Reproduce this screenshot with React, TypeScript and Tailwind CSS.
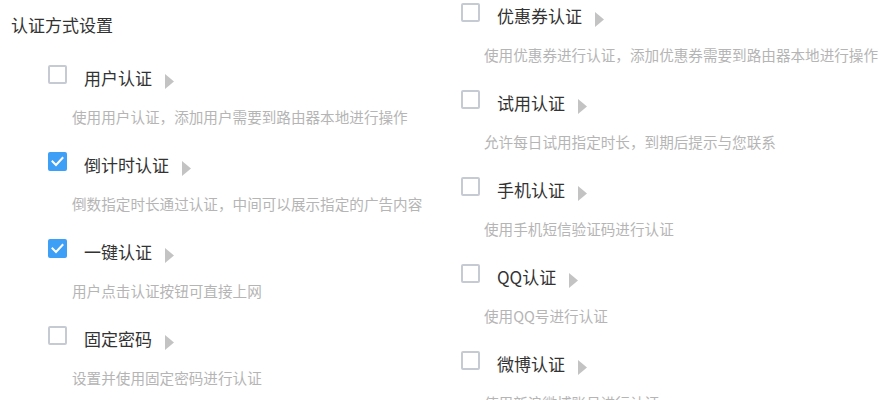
import React from "react";

type Item = { label: string; desc: string; checked?: boolean };

const left: Item[] = [
  { label: "用户认证", desc: "使用用户认证，添加用户需要到路由器本地进行操作" },
  { label: "倒计时认证", desc: "倒数指定时长通过认证，中间可以展示指定的广告内容", checked: true },
  { label: "一键认证", desc: "用户点击认证按钮可直接上网", checked: true },
  { label: "固定密码", desc: "设置并使用固定密码进行认证" },
];

const right: Item[] = [
  { label: "优惠券认证", desc: "使用优惠券进行认证，添加优惠券需要到路由器本地进行操作" },
  { label: "试用认证", desc: "允许每日试用指定时长，到期后提示与您联系" },
  { label: "手机认证", desc: "使用手机短信验证码进行认证" },
  { label: "QQ认证", desc: "使用QQ号进行认证" },
  { label: "微博认证", desc: "使用新浪微博账号进行认证" },
];

function Box({ checked }: { checked?: boolean }) {
  if (checked) {
    return (
      <div className="w-[19px] h-[19px] rounded-[2px] bg-[#3d9ff5] flex items-center justify-center shrink-0">
        <svg width="13" height="11" viewBox="0 0 13 11" fill="none">
          <path d="M1.5 5.5 L5 9 L11.5 2" stroke="white" strokeWidth="2" strokeLinecap="square" />
        </svg>
      </div>
    );
  }
  return <div className="w-[19px] h-[19px] rounded-[2px] border-2 border-[#c6cad3] bg-white shrink-0" />;
}

function Row({ item, descIndent }: { item: Item; descIndent: string }) {
  return (
    <div className="flex flex-col pb-[25px]">
      <div className="flex items-start h-[26px]">
        <Box checked={item.checked} />
        <span className="ml-[17px] text-[17px] leading-[26px] text-[#333]">{item.label}</span>
        <svg className="ml-[13px] mt-[9px]" width="9" height="15" viewBox="0 0 9 15">
          <path d="M0 0 L9 7.5 L0 15 Z" fill="#c3c3c3" />
        </svg>
      </div>
      <div className={`mt-[16px] text-[14.6px] leading-[20px] text-[#b5b5b5] whitespace-nowrap ${descIndent}`}>
        {item.desc}
      </div>
    </div>
  );
}

export default function App() {
  return (
    <div
      className="w-[879px] h-[400px] bg-white overflow-hidden flex"
      style={{ fontFamily: '"Noto Sans CJK SC", "Noto Sans", sans-serif' }}
    >
      <div className="w-[461px] shrink-0 flex flex-col">
        <div className="pl-[11px] pt-[12px] text-[17px] leading-[26px] text-[#333]">认证方式设置</div>
        <div className="pl-[48px] pt-[27px] flex flex-col">
          {left.map((it) => (
            <Row key={it.label} item={it} descIndent="ml-[24px]" />
          ))}
        </div>
      </div>
      <div className="flex flex-col pt-[3px]">
        {right.map((it) => (
          <Row key={it.label} item={it} descIndent="ml-[23px]" />
        ))}
      </div>
    </div>
  );
}
